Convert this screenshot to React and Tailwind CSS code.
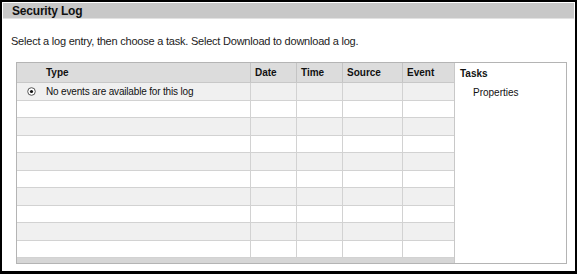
import React from 'react';

const COLS = ['Date', 'Time', 'Source', 'Event'];
const ROW_HEIGHTS = [18, 17, 18, 17, 18, 17, 18, 17, 18, 17];

const Radio = () => (
  <svg width="9" height="9" viewBox="0 0 9 9">
    <circle cx="4.5" cy="4.5" r="3.8" fill="#fff" stroke="#555" strokeWidth="1" />
    <circle cx="4.5" cy="4.5" r="1.6" fill="#111" />
  </svg>
);

const Row = ({ h, idx, children }) => (
  <div
    className={`grid grid-cols-[28px_206px_46px_46px_60px_51px] border-b border-[#d2d2d2] ${
      idx % 2 === 0 ? 'bg-[#f0f0f0]' : 'bg-white'
    }`}
    style={{ height: h }}
  >
    {children}
  </div>
);

export default function App() {
  return (
    <div className="w-[577px] h-[274px] bg-black pt-[2px] pl-[2px] font-['Liberation_Sans',Arial,sans-serif] text-[#111]">
      <div className="w-[573px] h-[269px] bg-white p-px">
        {/* Title bar */}
        <div className="h-[16px] bg-[#c8c8c8] border-b border-[#e2e2e2] pl-[9px] flex items-center">
          <span className="text-[12px] font-bold leading-none tracking-[-0.2px]">Security Log</span>
        </div>

        <p className="mt-[15px] pl-[8px] text-[11px] leading-[14px] tracking-[-0.22px] text-[#222]">
          Select a log entry, then choose a task. Select Download to download a log.
        </p>

        {/* Log table */}
        <div className="ml-[13px] mt-[14px] w-[551px] h-[202px] border border-[#b4b4b4] flex">
          <div className="w-[437px] flex flex-col">
            <div className="grid grid-cols-[28px_206px_46px_46px_60px_51px] h-[20px] bg-[#dcdcdc] border-b border-[#c8c8c8] text-[10px] font-bold">
              <div />
              <div className="border-r border-[#c4c4c4] flex items-center pl-px">Type</div>
              {COLS.map((c, i) => (
                <div
                  key={c}
                  className={`flex items-center pl-[4px] ${i < 3 ? 'border-r border-[#c4c4c4]' : ''}`}
                >
                  {c}
                </div>
              ))}
            </div>

            {ROW_HEIGHTS.map((h, idx) => (
              <Row key={idx} h={h} idx={idx}>
                <div className="flex items-center pl-[10px]">{idx === 0 && <Radio />}</div>
                <div className="border-r border-[#d2d2d2] flex items-center pl-px text-[10px] tracking-[-0.17px]">
                  {idx === 0 ? 'No events are available for this log' : ''}
                </div>
                <div className="border-r border-[#d2d2d2]" />
                <div className="border-r border-[#d2d2d2]" />
                <div className="border-r border-[#d2d2d2]" />
                <div />
              </Row>
            ))}

            <div className="flex-1 bg-[#d6d6d6]" />
          </div>

          {/* Tasks */}
          <div className="flex-1 border-l border-[#c8c8c8] bg-white">
            <div className="h-[20px] flex items-center pl-[5px] text-[10px] font-bold">Tasks</div>
            <div className="h-[18px] flex items-center pl-[18px] text-[10px]">Properties</div>
          </div>
        </div>
      </div>
    </div>
  );
}
